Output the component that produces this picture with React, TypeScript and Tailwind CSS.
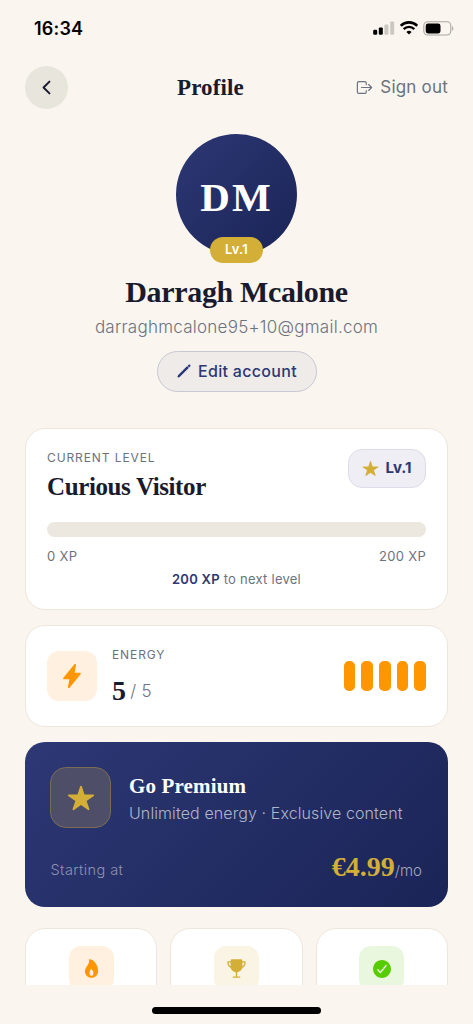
import type { ReactNode } from "react";
import {
  IoCheckmarkCircle,
  IoChevronBack,
  IoFlame,
  IoFlash,
  IoLogOutOutline,
  IoPencil,
  IoStar,
  IoTrophy,
} from "react-icons/io5";

const StatusBar = () => (
  <div className="flex h-[56px] items-center justify-between pl-[34px] pr-[19px]">
    <span className="mt-px font-['Inter',sans-serif] text-[18px] font-semibold leading-[20px] tracking-[0.2px] text-black">16:34</span>
    <div className="flex items-center gap-[5px]">
      <svg width="22" height="14" viewBox="0 0 22 14">
        <rect x="0.2" y="8.8" width="4" height="5" rx="1.2" />
        <rect x="5.8" y="6.4" width="4" height="7.4" rx="1.2" />
        <rect x="11.4" y="3.4" width="4" height="10.4" rx="1.2" fill="#cbc7c2" />
        <rect x="17.2" y="0.4" width="4" height="13.4" rx="1.2" fill="#cbc7c2" />
      </svg>
      <svg width="18" height="14" viewBox="0 0 18 14">
        <path d="M0.7 4.8a11.8 11.8 0 0 1 16.6 0" fill="none" stroke="#000" strokeWidth="2.6" />
        <path d="M3.7 8.1a7.5 7.5 0 0 1 10.6 0" fill="none" stroke="#000" strokeWidth="2.4" />
        <path d="M9 13.6 6.4 11a3.9 3.9 0 0 1 5.2 0z" />
      </svg>
      <svg width="31" height="15" viewBox="0 0 31 15">
        <rect x="0.8" y="0.8" width="27" height="13.2" rx="4" fill="none" stroke="#aaa6a1" strokeWidth="1.1" />
        <rect x="2.7" y="2.6" width="14.8" height="9.8" rx="2.3" />
        <path d="M29.2 5.2c1.5.5 1.5 4 0 4.5z" fill="#aaa6a1" />
      </svg>
    </div>
  </div>
);

const Header = () => (
  <header className="mt-[9px] grid h-[44px] grid-cols-[1fr_auto_1fr] items-center">
    <button className="flex size-[43px] items-center justify-center rounded-full bg-[#e8e5dd]" aria-label="Back">
      <IoChevronBack className="size-[21px] text-[#1a1a2e]" />
    </button>
    <h1 className="-ml-[52px] mt-[2px] w-[67px] whitespace-nowrap justify-self-center font-['Liberation_Serif',serif] text-[23px] font-bold leading-[28px] tracking-[0.1px] text-[#1a1a2e]">
      Profile
    </h1>
    <button className="flex items-center gap-[6px] justify-self-end text-[#6b7280]">
      <IoLogOutOutline className="size-[19px]" />
      <span className="text-[17px] leading-[24px] tracking-[0.2px]">Sign out</span>
    </button>
  </header>
);

const Card = ({ className, children }: { className: string; children: ReactNode }) => (
  <section className={`rounded-[20px] border-[1.5px] border-[#ede6db] bg-white ${className}`}>{children}</section>
);

const stats = [
  { icon: <IoFlame className="size-[21px] text-[#ff9600]" />, tile: "bg-[#fff0e0]" },
  { icon: <IoTrophy className="size-[21px] text-[#d4af37]" />, tile: "bg-[#faf4e5]" },
  { icon: <IoCheckmarkCircle className="size-[22px] text-[#58cc02]" />, tile: "bg-[#eaf7df]" },
];

export default function App() {
  return (
    <div className="h-[1024px] w-[473px] overflow-hidden bg-[#faf5ee] font-['Inter',sans-serif]">
      <StatusBar />

      <main className="h-[929px] overflow-hidden px-[25px]">
        <Header />

        <div className="mt-[24.5px] flex flex-col items-center">
          <div className="relative flex size-[121px] items-center justify-center rounded-full bg-linear-135 from-[#2d3875] to-[#1a2456]">
            <span className="mt-[6px] font-['Liberation_Serif',serif] text-[41px] font-bold leading-[50px] tracking-[2px] text-white">DM</span>
            <span className="absolute bottom-[-8px] left-[34px] flex h-[26px] w-[53px] items-center justify-center rounded-full bg-[#d4af37] text-[13px] font-semibold tracking-[0.2px] text-white">
              Lv.1
            </span>
          </div>
          <h2 className="mt-[19.5px] font-['Liberation_Serif',serif] text-[30px] font-bold leading-[36px] tracking-[-0.33px] text-[#1a1a2e]">Darragh Mcalone</h2>
          <p className="mt-[5px] text-[17px] font-light leading-[24px] tracking-[0.25px] text-[#6b7280]">darraghmcalone95+10@gmail.com</p>
          <button className="mt-[12px] flex h-[41px] w-[160px] items-center justify-center gap-[6px] rounded-full border-[1.5px] border-[#c8c8d4] bg-[#eeebe8] pb-px text-[#2d3875]">
            <IoPencil className="size-[16px]" />
            <span className="text-[16px] font-medium leading-[22px] tracking-[0.3px]">Edit account</span>
          </button>
        </div>

        <Card className="mt-[36px] h-[182px] px-[21px] pt-[20px]">
          <div className="flex justify-between">
            <div>
              <p className="text-[12px] leading-[17px] tracking-[0.9px] text-[#6b7280]">CURRENT LEVEL</p>
              <h3 className="mt-[5px] font-['Liberation_Serif',serif] text-[25px] font-bold leading-[32px] tracking-[-0.38px] text-[#1a1a2e]">Curious Visitor</h3>
            </div>
            <div className="flex h-[39px] w-[78px] items-center justify-center gap-[6px] rounded-[14px] border-[1.5px] border-[#dcdde9] bg-[#eeeef4]">
              <IoStar className="size-[17px] text-[#d4af37]" />
              <span className="text-[15px] font-bold text-[#2d3875]">Lv.1</span>
            </div>
          </div>
          <div className="mt-[18.5px] h-[15px] rounded-full bg-[#ece8e0]" />
          <div className="mt-[10.5px] flex justify-between text-[13px] leading-[18px] tracking-[0.3px] text-[#6b7280]">
            <span>0 XP</span>
            <span>200 XP</span>
          </div>
          <p className="mt-[5px] text-center text-[13px] leading-[18px] tracking-[0.25px] text-[#6b7280]">
            <strong className="font-semibold text-[#2d3875]">200 XP</strong> to next level
          </p>
        </Card>

        <Card className="mt-[15px] flex h-[102px] items-center px-[21px]">
          <div className="flex size-[50px] items-center justify-center rounded-[12px] bg-[#fff0e0]">
            <IoFlash className="size-[26px] text-[#ff9600]" />
          </div>
          <div className="-mt-[2px] ml-[15px] flex-1">
            <p className="text-[12px] leading-[17px] tracking-[0.9px] text-[#6b7280]">ENERGY</p>
            <p className="mt-[11px] flex items-baseline text-[17px] font-light leading-[28px] tracking-[0.3px] text-[#6b7280]">
              <span className="relative top-[3px] mr-[4px] font-['Liberation_Serif',serif] text-[28px] font-bold text-[#1a1a2e]">5</span>/ 5
            </p>
          </div>
          <div className="flex gap-[6px]">
            {[1, 2, 3, 4, 5].map((n) => (
              <div key={n} className="h-[30px] w-[11.7px] rounded-[5px] bg-[#ff9600]" />
            ))}
          </div>
        </Card>

        <section className="mt-[15px] h-[165px] rounded-[20px] bg-linear-135 from-[#2d3875] to-[#1a2456] px-[25px] pt-[25px]">
          <div className="flex">
            <div className="flex size-[61px] items-center justify-center rounded-[16px] border-[1.5px] border-[#7b6d54] bg-[#4e4e68]">
              <IoStar className="size-[28px] text-[#d4af37]" />
            </div>
            <div className="ml-[18px] pt-[5px]">
              <h3 className="font-['Liberation_Serif',serif] text-[21px] font-bold leading-[28px] tracking-[0.15px] text-white">Go Premium</h3>
              <p className="text-[16px] font-light leading-[26px] tracking-[0.1px] text-[#b2b5ca]">Unlimited energy · Exclusive content</p>
            </div>
          </div>
          <div className="mt-[23px] flex items-center justify-between pr-px">
            <span className="pl-[0.5px] text-[14.5px] font-light leading-[20px] tracking-[0.4px] text-[#8d92b1]">Starting at</span>
            <span className="-mt-[2px] flex items-baseline text-[15px] font-light leading-[36px] text-[#a3a7c0]">
              <span className="font-['Liberation_Serif',serif] text-[28px] font-bold text-[#d4af37]">€4.99</span>/mo
            </span>
          </div>
        </section>

        <div className="mt-[21px] grid grid-cols-3 gap-[13px]">
          {stats.map((s, i) => (
            <Card key={i} className="flex h-[140px] justify-center pt-[17px]">
              <div className={`flex size-[45px] items-center justify-center rounded-[12px] ${s.tile}`}>{s.icon}</div>
            </Card>
          ))}
        </div>
      </main>

      <div className="mx-auto mt-[22px] h-[7px] w-[169px] rounded-full bg-black" />
    </div>
  );
}
